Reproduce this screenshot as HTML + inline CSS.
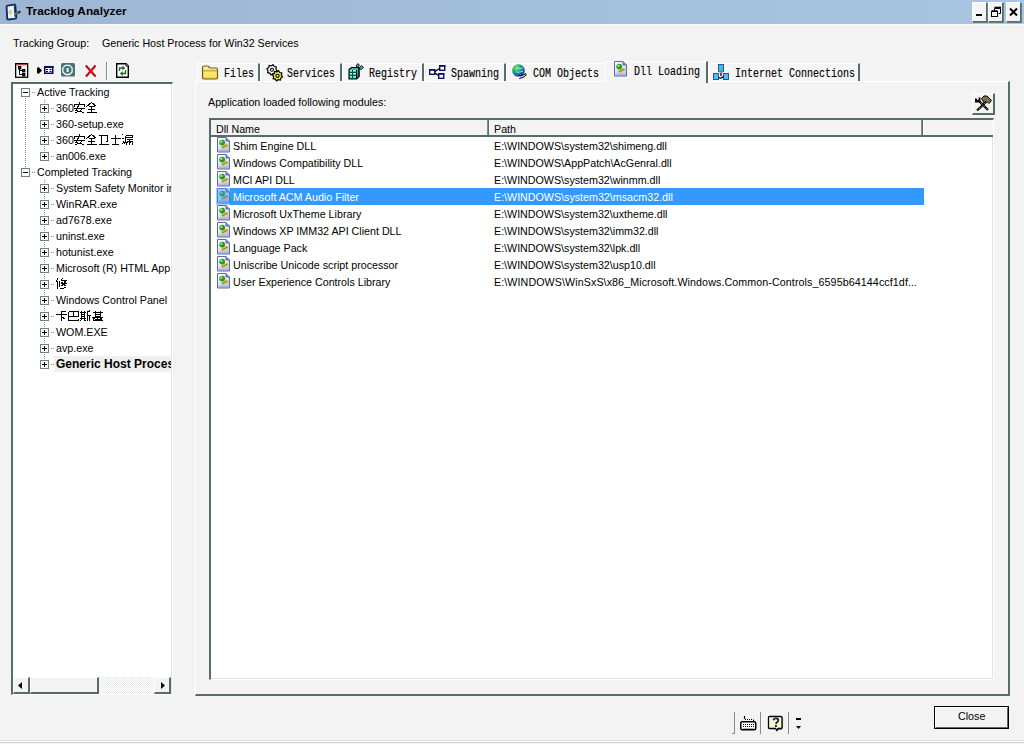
<!DOCTYPE html>
<html><head><meta charset="utf-8"><style>
*{margin:0;padding:0;box-sizing:border-box}
html,body{width:1024px;height:744px;overflow:hidden;background:#f3f3f3;font-family:"Liberation Sans",sans-serif;font-size:10.7px;color:#000}
.a{position:absolute}
.t{position:absolute;white-space:nowrap;line-height:13px}
.mono{position:absolute;white-space:nowrap;font-family:"Liberation Mono",monospace;font-size:10px;line-height:12px;transform:scaleY(1.2);transform-origin:0 0;-webkit-text-stroke:0.12px #000}
svg{position:absolute;overflow:visible}
</style></head><body>
<div class="a" style="left:0;top:0;width:1024px;height:24px;background:linear-gradient(90deg,#9db6d4,#a9c5e1)"></div><div class="a" style="left:0;top:24px;width:1024px;height:1px;background:#f8fafc"></div>
<svg style="left:2px;top:2px" width="22" height="20" viewBox="0 0 22 20">
<path d="M4.6 5 Q4.5 3.8 5.7 3.6 L12 2.6 Q13.2 2.4 13.3 3.6 L14.3 15.2 Q14.4 16.4 13.2 16.6 L6.5 17.5 Q5.3 17.7 5.2 16.5 Z" fill="#eaf2fc" stroke="#1a2a68" stroke-width="1.9"/>
<path d="M12.3 4 L13.1 15" stroke="#0a3a3a" stroke-width="1"/>
<ellipse cx="8.3" cy="10.3" rx="1.8" ry="2.8" fill="#ddd088"/>
<path d="M12.5 12.2 L18.5 9.6" stroke="#2a3048" stroke-width="2.2"/><path d="M12.5 12 L15.5 10.7" stroke="#d0e0f8" stroke-width="0.8"/>
</svg>
<div class="t" style="left:26px;top:4px;font-weight:bold;font-size:11.8px;line-height:15px;color:#000">Tracklog Analyzer</div>
<div class="a" style="left:972px;top:2px;width:15px;height:20px;background:#f4f4f4;border-top:1px solid #fff;border-left:1px solid #fff;border-right:1px solid #566c68;border-bottom:1px solid #566c68;box-shadow:1px 1px 0 #6d7d80"></div>
<div class="a" style="left:976px;top:14px;width:6px;height:2px;background:#000"></div>
<div class="a" style="left:988px;top:2px;width:15px;height:20px;background:#f4f4f4;border-top:1px solid #fff;border-left:1px solid #fff;border-right:1px solid #566c68;border-bottom:1px solid #566c68;box-shadow:1px 1px 0 #6d7d80"></div>
<svg style="left:988px;top:2px" width="16" height="20"><path d="M6.5 6.5 h6 v5 h-2 M6.5 6.5 v2" fill="none" stroke="#000" stroke-width="1"/><path d="M6.5 5.5 h6.5" stroke="#000" stroke-width="1.6"/><rect x="3.5" y="9.5" width="6" height="5" fill="none" stroke="#000"/><path d="M3.5 9 h6" stroke="#000" stroke-width="1.6"/></svg>
<div class="a" style="left:1006px;top:2px;width:15px;height:20px;background:#f4f4f4;border-top:1px solid #fff;border-left:1px solid #fff;border-right:1px solid #566c68;border-bottom:1px solid #566c68;box-shadow:1px 1px 0 #6d7d80"></div>
<svg style="left:1006px;top:2px" width="16" height="20"><path d="M4 6.5 L11 13.5 M11 6.5 L4 13.5" stroke="#000" stroke-width="2"/></svg>
<div class="t" style="left:13px;top:37px">Tracking Group:</div>
<div class="t" style="left:102px;top:37px">Generic Host Process for Win32 Services</div>
<svg style="left:12px;top:60px" width="24" height="20" viewBox="0 0 24 20">
<rect x="3.65" y="3.65" width="12" height="13.6" fill="#fff" stroke="#000" stroke-width="1.3"/>
<path d="M4.3 4.8 h10.7" stroke="#a01818" stroke-width="1"/>
<path d="M7.5 8.5 V14.5 H10.5 M7.5 10.5 H10.5" fill="none" stroke="#000" stroke-width="1"/>
<rect x="6.7" y="6.7" width="2" height="2" fill="#fff" stroke="#000" stroke-width="1.4"/>
<rect x="10.7" y="9.7" width="2" height="2" fill="#fff" stroke="#000" stroke-width="1.4"/>
<rect x="10.7" y="13.7" width="2" height="2" fill="#000" stroke="#000" stroke-width="1.4"/>
</svg>
<svg style="left:34px;top:60px" width="24" height="20" viewBox="0 0 24 20">
<path d="M3 8 L4.5 7 L8 10.5 L4.5 14 L3 13 Z" fill="#000"/>
<rect x="10.75" y="6.75" width="8" height="6.5" fill="#fff" stroke="#0a0a50" stroke-width="1.5"/>
<path d="M10 7 h9.5" stroke="#0a0a60" stroke-width="2"/>
<path d="M12 9.5 h2 M15.5 9.5 h2 M12 11.5 h2 M15.5 11.5 h2" stroke="#000" stroke-width="1"/>
</svg>
<svg style="left:60px;top:62px" width="16" height="16" viewBox="0 0 16 16">
<rect x="1" y="1" width="14" height="13.6" rx="1.5" fill="#4b7272"/>
<path d="M5.5 3.3 h4 l2.6 2.6 v4 l-2.6 2.6 h-4 l-2.6 -2.6 v-4 z" fill="#4b7272" stroke="#e6ffff" stroke-width="1.3"/>
<rect x="6.6" y="6" width="2" height="4" fill="#e8ffff"/>
</svg>
<svg style="left:84px;top:64px" width="14" height="14" viewBox="0 0 14 14">
<path d="M1.8 1.5 L11.6 12.5 M11.6 1.5 L2 12.5" stroke="#b80c18" stroke-width="2.1"/><path d="M5 5 L8.5 8.5 M8.5 5 L5 8.5" stroke="#f01010" stroke-width="1.5"/>
</svg>
<div class="a" style="left:106px;top:62px;width:1px;height:18px;background:#7c9090"></div><div class="a" style="left:107px;top:62px;width:1px;height:18px;background:#fff"></div>
<svg style="left:112px;top:60px" width="24" height="20" viewBox="0 0 24 20">
<path d="M4.7 3.7 H14 L16.3 6 V17.3 H4.7 Z" fill="#fff" stroke="#000" stroke-width="1.4"/>
<path d="M14 3.7 V6 H16.3" fill="#fff" stroke="#000" stroke-width="1"/>
<path d="M7.5 11 V8 H11" fill="none" stroke="#1a6a2a" stroke-width="1.3"/>
<path d="M10.5 5.5 L13.3 8 L10.5 10.2 Z" fill="#1a6a2a"/>
<path d="M13.5 10 V13.5 H10" fill="none" stroke="#1a6a2a" stroke-width="1.3"/>
<path d="M10.7 11 L7.9 13.5 L10.7 16 Z" fill="#1a6a2a"/>
</svg>
<div class="a" style="left:11px;top:82px;width:162px;height:613px;background:#fff;border-top:2px solid #566c68;border-left:2px solid #566c68;border-right:1px solid #fff;border-bottom:1px solid #fff"><div class="a" style="left:0;top:0;right:0;bottom:0;border-right:1px solid #e2e2e2;border-bottom:1px solid #e2e2e2"></div></div>
<div class="a" style="left:13px;top:84px;width:158px;height:593px;overflow:hidden">
<div class="a" style="left:12px;top:14px;width:1px;height:70px;background:repeating-linear-gradient(#7f8f8f 0 1px,transparent 1px 2px)"></div>
<div class="a" style="left:31px;top:16px;width:1px;height:52px;background:repeating-linear-gradient(#7f8f8f 0 1px,transparent 1px 2px)"></div>
<div class="a" style="left:31px;top:96px;width:1px;height:180px;background:repeating-linear-gradient(#7f8f8f 0 1px,transparent 1px 2px)"></div>
<div class="a" style="left:8px;top:4px;width:9px;height:9px;border:1px solid #6d837e;background:#fff"></div><div class="a" style="left:10px;top:8px;width:5px;height:1px;background:#000"></div>
<div class="a" style="left:19px;top:8px;width:3px;height:1px;background:repeating-linear-gradient(90deg,#7f8f8f 0 1px,transparent 1px 2px)"></div>
<div class="t" style="left:24px;top:2px">Active Tracking</div>
<div class="a" style="left:27px;top:20px;width:9px;height:9px;border:1px solid #6d837e;background:#fff"></div><div class="a" style="left:29px;top:24px;width:5px;height:1px;background:#000"></div><div class="a" style="left:31px;top:22px;width:1px;height:5px;background:#000"></div>
<div class="a" style="left:38px;top:24px;width:3px;height:1px;background:repeating-linear-gradient(90deg,#7f8f8f 0 1px,transparent 1px 2px)"></div>
<div class="t" style="left:43px;top:18px">360</div>
<svg style="left:61px;top:18px" width="12" height="12"><path d="M5.5 0 V2 M0.5 4.5 V2.5 H10.5 V4.5 M0 6.5 H11 M4.5 3.5 L2 8.5 L10 10.5 M8 6.5 L6.5 9 L1 10.5" stroke="#000" stroke-width="1" fill="none" shape-rendering="crispEdges"/></svg><svg style="left:73px;top:18px" width="12" height="12"><path d="M5.5 0.5 L0.5 4.5 M5.5 0.5 L10.5 4.5 M2.5 4.5 H8.5 M2 7.5 H9 M0.5 10.5 H10.5 M5.5 4.5 V10.5" stroke="#000" stroke-width="1" fill="none" shape-rendering="crispEdges"/></svg>
<div class="a" style="left:27px;top:36px;width:9px;height:9px;border:1px solid #6d837e;background:#fff"></div><div class="a" style="left:29px;top:40px;width:5px;height:1px;background:#000"></div><div class="a" style="left:31px;top:38px;width:1px;height:5px;background:#000"></div>
<div class="a" style="left:38px;top:40px;width:3px;height:1px;background:repeating-linear-gradient(90deg,#7f8f8f 0 1px,transparent 1px 2px)"></div>
<div class="t" style="left:43px;top:34px">360-setup.exe</div>
<div class="a" style="left:27px;top:52px;width:9px;height:9px;border:1px solid #6d837e;background:#fff"></div><div class="a" style="left:29px;top:56px;width:5px;height:1px;background:#000"></div><div class="a" style="left:31px;top:54px;width:1px;height:5px;background:#000"></div>
<div class="a" style="left:38px;top:56px;width:3px;height:1px;background:repeating-linear-gradient(90deg,#7f8f8f 0 1px,transparent 1px 2px)"></div>
<div class="t" style="left:43px;top:50px">360</div>
<svg style="left:61px;top:50px" width="12" height="12"><path d="M5.5 0 V2 M0.5 4.5 V2.5 H10.5 V4.5 M0 6.5 H11 M4.5 3.5 L2 8.5 L10 10.5 M8 6.5 L6.5 9 L1 10.5" stroke="#000" stroke-width="1" fill="none" shape-rendering="crispEdges"/></svg><svg style="left:73px;top:50px" width="12" height="12"><path d="M5.5 0.5 L0.5 4.5 M5.5 0.5 L10.5 4.5 M2.5 4.5 H8.5 M2 7.5 H9 M0.5 10.5 H10.5 M5.5 4.5 V10.5" stroke="#000" stroke-width="1" fill="none" shape-rendering="crispEdges"/></svg><svg style="left:85px;top:50px" width="12" height="12"><path d="M1 1.5 H9.5 V7.5 H8 M3.5 1.5 V10.5 M0.5 10.5 H10.5" stroke="#000" stroke-width="1" fill="none" shape-rendering="crispEdges"/></svg><svg style="left:97px;top:50px" width="12" height="12"><path d="M0.5 4.5 H10.5 M5.5 0.5 V10.5 M2 10.5 H9" stroke="#000" stroke-width="1" fill="none" shape-rendering="crispEdges"/></svg><svg style="left:109px;top:50px" width="12" height="12"><path d="M0.5 0.5 L1.5 1.5 M0 4 L1.5 5 M0.5 10.5 L2 7 M3.5 1.5 H10.5 V3.5 H3.5 M3.5 1.5 V6.5 L2.5 10.5 M4.5 5.5 H10.5 M4.5 7.5 H10.5 V10.5 M4.5 7.5 V10.5 M7.5 5.5 V10.5 M5.5 8.5 L6.5 9.5 M8.5 8.5 L9.5 9.5" stroke="#000" stroke-width="1" fill="none" shape-rendering="crispEdges"/></svg>
<div class="a" style="left:27px;top:68px;width:9px;height:9px;border:1px solid #6d837e;background:#fff"></div><div class="a" style="left:29px;top:72px;width:5px;height:1px;background:#000"></div><div class="a" style="left:31px;top:70px;width:1px;height:5px;background:#000"></div>
<div class="a" style="left:38px;top:72px;width:3px;height:1px;background:repeating-linear-gradient(90deg,#7f8f8f 0 1px,transparent 1px 2px)"></div>
<div class="t" style="left:43px;top:66px">an006.exe</div>
<div class="a" style="left:8px;top:84px;width:9px;height:9px;border:1px solid #6d837e;background:#fff"></div><div class="a" style="left:10px;top:88px;width:5px;height:1px;background:#000"></div>
<div class="a" style="left:19px;top:88px;width:3px;height:1px;background:repeating-linear-gradient(90deg,#7f8f8f 0 1px,transparent 1px 2px)"></div>
<div class="t" style="left:24px;top:82px">Completed Tracking</div>
<div class="a" style="left:27px;top:100px;width:9px;height:9px;border:1px solid #6d837e;background:#fff"></div><div class="a" style="left:29px;top:104px;width:5px;height:1px;background:#000"></div><div class="a" style="left:31px;top:102px;width:1px;height:5px;background:#000"></div>
<div class="a" style="left:38px;top:104px;width:3px;height:1px;background:repeating-linear-gradient(90deg,#7f8f8f 0 1px,transparent 1px 2px)"></div>
<div class="t" style="left:43px;top:98px">System Safety Monitor ir</div>
<div class="a" style="left:27px;top:116px;width:9px;height:9px;border:1px solid #6d837e;background:#fff"></div><div class="a" style="left:29px;top:120px;width:5px;height:1px;background:#000"></div><div class="a" style="left:31px;top:118px;width:1px;height:5px;background:#000"></div>
<div class="a" style="left:38px;top:120px;width:3px;height:1px;background:repeating-linear-gradient(90deg,#7f8f8f 0 1px,transparent 1px 2px)"></div>
<div class="t" style="left:43px;top:114px">WinRAR.exe</div>
<div class="a" style="left:27px;top:132px;width:9px;height:9px;border:1px solid #6d837e;background:#fff"></div><div class="a" style="left:29px;top:136px;width:5px;height:1px;background:#000"></div><div class="a" style="left:31px;top:134px;width:1px;height:5px;background:#000"></div>
<div class="a" style="left:38px;top:136px;width:3px;height:1px;background:repeating-linear-gradient(90deg,#7f8f8f 0 1px,transparent 1px 2px)"></div>
<div class="t" style="left:43px;top:130px">ad7678.exe</div>
<div class="a" style="left:27px;top:148px;width:9px;height:9px;border:1px solid #6d837e;background:#fff"></div><div class="a" style="left:29px;top:152px;width:5px;height:1px;background:#000"></div><div class="a" style="left:31px;top:150px;width:1px;height:5px;background:#000"></div>
<div class="a" style="left:38px;top:152px;width:3px;height:1px;background:repeating-linear-gradient(90deg,#7f8f8f 0 1px,transparent 1px 2px)"></div>
<div class="t" style="left:43px;top:146px">uninst.exe</div>
<div class="a" style="left:27px;top:164px;width:9px;height:9px;border:1px solid #6d837e;background:#fff"></div><div class="a" style="left:29px;top:168px;width:5px;height:1px;background:#000"></div><div class="a" style="left:31px;top:166px;width:1px;height:5px;background:#000"></div>
<div class="a" style="left:38px;top:168px;width:3px;height:1px;background:repeating-linear-gradient(90deg,#7f8f8f 0 1px,transparent 1px 2px)"></div>
<div class="t" style="left:43px;top:162px">hotunist.exe</div>
<div class="a" style="left:27px;top:180px;width:9px;height:9px;border:1px solid #6d837e;background:#fff"></div><div class="a" style="left:29px;top:184px;width:5px;height:1px;background:#000"></div><div class="a" style="left:31px;top:182px;width:1px;height:5px;background:#000"></div>
<div class="a" style="left:38px;top:184px;width:3px;height:1px;background:repeating-linear-gradient(90deg,#7f8f8f 0 1px,transparent 1px 2px)"></div>
<div class="t" style="left:43px;top:178px">Microsoft (R) HTML App</div>
<div class="a" style="left:27px;top:196px;width:9px;height:9px;border:1px solid #6d837e;background:#fff"></div><div class="a" style="left:29px;top:200px;width:5px;height:1px;background:#000"></div><div class="a" style="left:31px;top:198px;width:1px;height:5px;background:#000"></div>
<div class="a" style="left:38px;top:200px;width:3px;height:1px;background:repeating-linear-gradient(90deg,#7f8f8f 0 1px,transparent 1px 2px)"></div>
<svg style="left:43px;top:194px" width="12" height="12"><path d="M2 0.5 L0 4 M1.5 2.5 V11 M3.5 2.5 V9 M6.5 0.5 L5 2.5 M5 2.5 H10 L8.5 4 M5.5 4 L9.5 8 M9.5 4 L5.5 8 M4.5 5.5 H11 M4 10.5 H7.5 L10 9" stroke="#000" stroke-width="1" fill="none" shape-rendering="crispEdges"/></svg>
<div class="a" style="left:27px;top:212px;width:9px;height:9px;border:1px solid #6d837e;background:#fff"></div><div class="a" style="left:29px;top:216px;width:5px;height:1px;background:#000"></div><div class="a" style="left:31px;top:214px;width:1px;height:5px;background:#000"></div>
<div class="a" style="left:38px;top:216px;width:3px;height:1px;background:repeating-linear-gradient(90deg,#7f8f8f 0 1px,transparent 1px 2px)"></div>
<div class="t" style="left:43px;top:210px">Windows Control Panel</div>
<div class="a" style="left:27px;top:228px;width:9px;height:9px;border:1px solid #6d837e;background:#fff"></div><div class="a" style="left:29px;top:232px;width:5px;height:1px;background:#000"></div><div class="a" style="left:31px;top:230px;width:1px;height:5px;background:#000"></div>
<div class="a" style="left:38px;top:232px;width:3px;height:1px;background:repeating-linear-gradient(90deg,#7f8f8f 0 1px,transparent 1px 2px)"></div>
<svg style="left:43px;top:226px" width="12" height="12"><path d="M5.5 0.5 V11 M5.5 1.5 H9.5 M0 4.5 H11 M6 7 L9 9" stroke="#000" stroke-width="1" fill="none" shape-rendering="crispEdges"/></svg><svg style="left:55px;top:226px" width="12" height="12"><path d="M0.5 1.5 H10 V6.5 H0.5 M0.5 1.5 V10.5 H10.5 V9 M5.5 1.5 V6.5" stroke="#000" stroke-width="1" fill="none" shape-rendering="crispEdges"/></svg><svg style="left:67px;top:226px" width="12" height="12"><path d="M0 2.5 H6 M1.5 0.5 V8.5 M4.5 0.5 V8.5 M1.5 4.5 H4.5 M1.5 6.5 H4.5 M0 8.5 H6 M2 9 L0.5 11 M4 9 L5.5 11 M10.5 0.5 L7.5 2 V11 M7.5 5.5 H11 M9.5 5.5 V11" stroke="#000" stroke-width="1" fill="none" shape-rendering="crispEdges"/></svg><svg style="left:79px;top:226px" width="12" height="12"><path d="M0.5 2.5 H10.5 M3 0.5 V7 M8 0.5 V7 M3 4.5 H8 M3 6.5 H8 M0 7.5 H11 M3 8 L1 9.5 M8 8 L10 9.5 M5.5 7.5 V11 M2.5 9.5 H8.5 M0.5 10.5 H10.5" stroke="#000" stroke-width="1" fill="none" shape-rendering="crispEdges"/></svg>
<div class="a" style="left:27px;top:244px;width:9px;height:9px;border:1px solid #6d837e;background:#fff"></div><div class="a" style="left:29px;top:248px;width:5px;height:1px;background:#000"></div><div class="a" style="left:31px;top:246px;width:1px;height:5px;background:#000"></div>
<div class="a" style="left:38px;top:248px;width:3px;height:1px;background:repeating-linear-gradient(90deg,#7f8f8f 0 1px,transparent 1px 2px)"></div>
<div class="t" style="left:43px;top:242px">WOM.EXE</div>
<div class="a" style="left:27px;top:260px;width:9px;height:9px;border:1px solid #6d837e;background:#fff"></div><div class="a" style="left:29px;top:264px;width:5px;height:1px;background:#000"></div><div class="a" style="left:31px;top:262px;width:1px;height:5px;background:#000"></div>
<div class="a" style="left:38px;top:264px;width:3px;height:1px;background:repeating-linear-gradient(90deg,#7f8f8f 0 1px,transparent 1px 2px)"></div>
<div class="t" style="left:43px;top:258px">avp.exe</div>
<div class="a" style="left:27px;top:276px;width:9px;height:9px;border:1px solid #6d837e;background:#fff"></div><div class="a" style="left:29px;top:280px;width:5px;height:1px;background:#000"></div><div class="a" style="left:31px;top:278px;width:1px;height:5px;background:#000"></div>
<div class="a" style="left:38px;top:280px;width:3px;height:1px;background:repeating-linear-gradient(90deg,#7f8f8f 0 1px,transparent 1px 2px)"></div>
<div class="a" style="left:41px;top:272px;width:120px;height:16px;background:#f0f0f0"></div>
<div class="t" style="left:43px;top:274px;font-weight:bold;font-size:12px">Generic Host Proces</div>
</div>
<div class="a" style="left:13px;top:677px;width:158px;height:17px;background:repeating-conic-gradient(#fff 0 25%,#ebebeb 0 50%) 0 0/2px 2px"></div>
<div class="a" style="left:13px;top:677px;width:17px;height:17px;background:#f3f3f3;border-top:1px solid #fff;border-left:1px solid #fff;border-right:2px solid #566c68;border-bottom:2px solid #566c68"></div>
<div class="a" style="left:30px;top:677px;width:69px;height:17px;background:#f3f3f3;border-top:1px solid #fff;border-left:1px solid #fff;border-right:2px solid #566c68;border-bottom:2px solid #566c68"></div>
<div class="a" style="left:154px;top:677px;width:17px;height:17px;background:#f3f3f3;border-top:1px solid #fff;border-left:1px solid #fff;border-right:2px solid #566c68;border-bottom:2px solid #566c68"></div>
<svg style="left:13px;top:677px" width="17" height="17"><path d="M5 8.5 L9 5 V12 Z" fill="#000"/></svg>
<svg style="left:154px;top:677px" width="17" height="17"><path d="M11 8.5 L7 5 V12 Z" fill="#000"/></svg>
<div class="a" style="left:195px;top:81px;width:815px;height:615px;border-left:1px solid #fff;border-top:1px solid #fff;border-right:2px solid #566c68;border-bottom:2px solid #566c68"></div>
<div class="a" style="left:197px;top:63px;width:63px;height:18px;background:#f5f5f5;border-top:1px solid #fff;border-left:1px solid #fff;border-right:2px solid #566c68"></div>
<div class="mono" style="left:224px;top:67px">Files</div>
<svg style="left:201px;top:64px" width="18" height="16" viewBox="0 0 18 16"><defs><linearGradient id="fg" x1="0" y1="0" x2="0" y2="1"><stop offset="0" stop-color="#fff4a0"/><stop offset="1" stop-color="#e8c838"/></linearGradient></defs>
<path d="M1.5 4 q0 -2 2 -2 h3.5 l2 2 h6 q1.5 0 1.5 1.5 v8 q0 1.5 -1.5 1.5 h-12 q-1.5 0 -1.5 -1.5 z" fill="url(#fg)" stroke="#7a5a18" stroke-width="1.2"/>
<path d="M2 6.8 h14.5" stroke="#b89030" stroke-width="1"/><path d="M3 8 h12.5 v5.5 h-12.5z" fill="#fcec70" opacity=".7"/></svg>
<div class="a" style="left:260px;top:63px;width:82px;height:18px;background:#f5f5f5;border-top:1px solid #fff;border-left:1px solid #fff;border-right:2px solid #566c68"></div>
<div class="mono" style="left:287px;top:67px">Services</div>
<svg style="left:264px;top:63px" width="21" height="20" viewBox="0 0 21 20"><path d="M13.10 7.81 L11.33 9.02 L10.89 11.12 L8.78 10.72 L6.99 11.90 L5.78 10.13 L3.68 9.69 L4.08 7.58 L2.90 5.79 L4.67 4.58 L5.11 2.48 L7.22 2.88 L9.01 1.70 L10.22 3.47 L12.32 3.91 L11.92 6.02 Z" fill="#fff" stroke="#000" stroke-width="1.2"/><circle cx="8" cy="6.8" r="1.5" fill="#fff" stroke="#000" stroke-width="1.1"/>
<path d="M18.60 13.81 L16.83 15.02 L16.39 17.12 L14.28 16.72 L12.49 17.90 L11.28 16.13 L9.18 15.69 L9.58 13.58 L8.40 11.79 L10.17 10.58 L10.61 8.48 L12.72 8.88 L14.51 7.70 L15.72 9.47 L17.82 9.91 L17.42 12.02 Z" fill="#e4e44a" stroke="#000" stroke-width="1.2"/><circle cx="13.5" cy="12.8" r="1.6" fill="#fff" stroke="#000" stroke-width="1.1"/></svg>
<div class="a" style="left:342px;top:63px;width:82px;height:18px;background:#f5f5f5;border-top:1px solid #fff;border-left:1px solid #fff;border-right:2px solid #566c68"></div>
<div class="mono" style="left:369px;top:67px">Registry</div>
<svg style="left:345px;top:62px" width="20" height="20" viewBox="0 0 20 20"><path d="M4 7.5 l2.5 -2 h7.5 v9 l-2.5 2.5 h-7.5 z" fill="#30b8a8" stroke="#000" stroke-width="1.1"/>
<path d="M11.5 8 v9" stroke="#000"/><path d="M14 5.5 v9 l-2.5 2.5" fill="#1a6a60" stroke="#000"/>
<path d="M4.5 10.5 h7 M4.5 13.5 h7 M7.5 8 v9" stroke="#0a4a44" stroke-width="1"/>
<path d="M5 8.7 h2 M8.3 8.7 h2.5 M5 11.7 h2 M8.3 11.7 h2.5 M5 14.7 h2 M8.3 14.7 h2.5" stroke="#a8fff4" stroke-width="1.3"/>
<path d="M11 4 l2 -2.5 l1.5 2 l-2 1.5z M14 6 l2.5 -2.5 l2 2 l-2.5 2z" fill="#30b8a8" stroke="#000" stroke-width="0.9"/></svg>
<div class="a" style="left:424px;top:63px;width:82px;height:18px;background:#f5f5f5;border-top:1px solid #fff;border-left:1px solid #fff;border-right:2px solid #566c68"></div>
<div class="mono" style="left:451px;top:67px">Spawning</div>
<svg style="left:425px;top:62px" width="22" height="20" viewBox="0 0 22 20"><g fill="#fff" stroke="#10106a" stroke-width="1.4">
<rect x="4.7" y="7.7" width="5" height="4.6"/><rect x="14.7" y="3.7" width="5" height="4.6"/><rect x="13.7" y="11.7" width="5" height="4.6"/></g>
<path d="M4 8 h6.5 M14 4 h6.5 M13 12 h6.5" stroke="#10106a" stroke-width="1.6"/>
<path d="M10 9.5 L14.5 6.5 M10 11 L13.5 13.5" stroke="#000" stroke-width="1.2"/></svg>
<div class="a" style="left:506px;top:63px;width:100px;height:18px;background:#f5f5f5;border-top:1px solid #fff;border-left:1px solid #fff;border-right:none"></div>
<div class="mono" style="left:533px;top:67px">COM Objects</div>
<svg style="left:508px;top:62px" width="20" height="20" viewBox="0 0 20 20"><defs><radialGradient id="gg" cx=".35" cy=".3" r=".8"><stop offset="0" stop-color="#7ef07e"/><stop offset=".4" stop-color="#28a860"/><stop offset=".75" stop-color="#1a56c8"/><stop offset="1" stop-color="#0a2a90"/></radialGradient></defs>
<circle cx="10.5" cy="8.5" r="6.3" fill="url(#gg)"/>
<path d="M9 6 q3 1 6 0 M8 10 q3 1 7 -1" stroke="#9ef0f0" stroke-width="1" fill="none" opacity=".8"/>
<path d="M10 13.5 q3 1 6 -1 l1.5 -1 l0.8 1.5 q-2 2.5 -7 3.5" fill="#c8d0ff" stroke="#000" stroke-width="1"/></svg>
<div class="a" style="left:708px;top:63px;width:152px;height:18px;background:#f5f5f5;border-top:1px solid #fff;border-left:1px solid #fff;border-right:2px solid #566c68"></div>
<div class="mono" style="left:735px;top:67px">Internet Connections</div>
<svg style="left:709px;top:62px" width="22" height="20" viewBox="0 0 22 20"><g stroke="#3050a0" stroke-width="1">
<rect x="9.5" y="2.5" width="5" height="7" fill="#30c0e0"/>
<rect x="4.5" y="11.5" width="5" height="6" fill="#40c8e8"/>
<rect x="14.5" y="11.5" width="5" height="6" fill="#40c8e8"/></g>
<path d="M9.5 9.5 h5 l-1 1.5 h-3z" fill="#c090c0"/>
<path d="M12 11 v3 M9.5 15.5 q2.5 1.5 5 -1" stroke="#000" stroke-width="1.3" fill="none"/></svg>
<div class="a" style="left:605px;top:61px;width:103px;height:22px;background:#f3f3f3;border-top:1px solid #fff;border-left:1px solid #fff;border-right:2px solid #566c68"></div>
<div class="mono" style="left:634px;top:65px">Dll Loading</div>
<svg style="left:613px;top:61px" width="16" height="16" viewBox="0 0 16 16"><defs><linearGradient id="dp" x1="0" y1="0" x2="0.4" y2="1"><stop offset="0" stop-color="#fff"/><stop offset=".6" stop-color="#d8eafa"/><stop offset="1" stop-color="#b8c8f0"/></linearGradient></defs>
<path d="M1.5 0.5 h8.5 l3.5 3.5 v11 h-12 z" fill="url(#dp)" stroke="#66689a" stroke-width="1"/>
<path d="M10 0.5 v3.5 h3.5" fill="#7a8ad8" stroke="#66689a" stroke-width="1"/>
<path d="M4.5 9.8 L10.5 6.5 L12.8 9 L7 12.3 Z" fill="#dcc040"/><path d="M6 10.8 L11.5 8" stroke="#8a7020" stroke-width="0.9"/>
<circle cx="6.2" cy="5.6" r="2.9" fill="#2a962a"/><circle cx="5.4" cy="4.8" r="1.2" fill="#9ae87a"/>
<path d="M3 13.2 h9.5" stroke="#a8b4e8" stroke-width="1.2"/></svg>
<div class="t" style="left:208px;top:96px">Application loaded following modules:</div>
<div class="a" style="left:972px;top:93px;width:23px;height:22px;border-top:1px solid #fff;border-left:1px solid #fff;border-right:2px solid #566c68;border-bottom:2px solid #566c68"></div>
<svg style="left:972px;top:93px" width="23" height="22" viewBox="0 0 23 22"><path d="M9.5 5.5 l2.5 -2.5 h3 l4.5 4.5 l-2.5 3 l-2 -2 l-2.5 2 z" fill="#7c7446" stroke="#000" stroke-width="1"/>
<path d="M14.5 8.5 L5 17.5" stroke="#000" stroke-width="2.3"/><path d="M14.5 8.5 L5 17.5" stroke="#fff" stroke-width="0.7" stroke-dasharray="1 1.3"/>
<path d="M7.5 8.5 L16 17" stroke="#000" stroke-width="2.3"/><path d="M7.5 8.5 L16 17" stroke="#fff" stroke-width="0.7" stroke-dasharray="1 1.3"/>
<path d="M3 5.5 v4 h4 l1.5 -1.5 v-3.5 h-1.8 v2.3 h-1.9 v-1.3 z" fill="#000"/></svg>
<div class="a" style="left:209px;top:118px;width:785px;height:562px;background:#fff;border-top:2px solid #566c68;border-left:2px solid #566c68;border-right:1px solid #fff;border-bottom:1px solid #fff"><div class="a" style="left:0;top:0;right:0;bottom:0;border-right:1px solid #e2e2e2;border-bottom:1px solid #e2e2e2"></div></div>
<div class="a" style="left:211px;top:120px;width:782px;height:17px;background:#f3f3f3;border-bottom:2px solid #566c68"></div>
<div class="a" style="left:487px;top:120px;width:1px;height:15px;background:#7d9090"></div><div class="a" style="left:488px;top:120px;width:1px;height:15px;background:#566c68"></div><div class="a" style="left:489px;top:120px;width:1px;height:15px;background:#fff"></div>
<div class="a" style="left:921px;top:120px;width:1px;height:15px;background:#7d9090"></div><div class="a" style="left:922px;top:120px;width:1px;height:15px;background:#566c68"></div><div class="a" style="left:923px;top:120px;width:1px;height:15px;background:#fff"></div>
<div class="t" style="left:216px;top:123px">Dll Name</div>
<div class="t" style="left:494px;top:123px">Path</div>
<svg style="left:216px;top:137px" width="16" height="16" viewBox="0 0 16 16"><defs><linearGradient id="dp" x1="0" y1="0" x2="0.4" y2="1"><stop offset="0" stop-color="#fff"/><stop offset=".6" stop-color="#d8eafa"/><stop offset="1" stop-color="#b8c8f0"/></linearGradient></defs>
<path d="M1.5 0.5 h8.5 l3.5 3.5 v11 h-12 z" fill="url(#dp)" stroke="#66689a" stroke-width="1"/>
<path d="M10 0.5 v3.5 h3.5" fill="#7a8ad8" stroke="#66689a" stroke-width="1"/>
<path d="M4.5 9.8 L10.5 6.5 L12.8 9 L7 12.3 Z" fill="#dcc040"/><path d="M6 10.8 L11.5 8" stroke="#8a7020" stroke-width="0.9"/>
<circle cx="6.2" cy="5.6" r="2.9" fill="#2a962a"/><circle cx="5.4" cy="4.8" r="1.2" fill="#9ae87a"/>
<path d="M3 13.2 h9.5" stroke="#a8b4e8" stroke-width="1.2"/></svg>
<div class="t" style="left:233px;top:140px;color:#000">Shim Engine DLL</div>
<div class="t" style="left:494px;top:140px;color:#000;">E:\WINDOWS\system32\shimeng.dll</div>
<svg style="left:216px;top:154px" width="16" height="16" viewBox="0 0 16 16"><defs><linearGradient id="dp" x1="0" y1="0" x2="0.4" y2="1"><stop offset="0" stop-color="#fff"/><stop offset=".6" stop-color="#d8eafa"/><stop offset="1" stop-color="#b8c8f0"/></linearGradient></defs>
<path d="M1.5 0.5 h8.5 l3.5 3.5 v11 h-12 z" fill="url(#dp)" stroke="#66689a" stroke-width="1"/>
<path d="M10 0.5 v3.5 h3.5" fill="#7a8ad8" stroke="#66689a" stroke-width="1"/>
<path d="M4.5 9.8 L10.5 6.5 L12.8 9 L7 12.3 Z" fill="#dcc040"/><path d="M6 10.8 L11.5 8" stroke="#8a7020" stroke-width="0.9"/>
<circle cx="6.2" cy="5.6" r="2.9" fill="#2a962a"/><circle cx="5.4" cy="4.8" r="1.2" fill="#9ae87a"/>
<path d="M3 13.2 h9.5" stroke="#a8b4e8" stroke-width="1.2"/></svg>
<div class="t" style="left:233px;top:157px;color:#000">Windows Compatibility DLL</div>
<div class="t" style="left:494px;top:157px;color:#000;">E:\WINDOWS\AppPatch\AcGenral.dll</div>
<svg style="left:216px;top:171px" width="16" height="16" viewBox="0 0 16 16"><defs><linearGradient id="dp" x1="0" y1="0" x2="0.4" y2="1"><stop offset="0" stop-color="#fff"/><stop offset=".6" stop-color="#d8eafa"/><stop offset="1" stop-color="#b8c8f0"/></linearGradient></defs>
<path d="M1.5 0.5 h8.5 l3.5 3.5 v11 h-12 z" fill="url(#dp)" stroke="#66689a" stroke-width="1"/>
<path d="M10 0.5 v3.5 h3.5" fill="#7a8ad8" stroke="#66689a" stroke-width="1"/>
<path d="M4.5 9.8 L10.5 6.5 L12.8 9 L7 12.3 Z" fill="#dcc040"/><path d="M6 10.8 L11.5 8" stroke="#8a7020" stroke-width="0.9"/>
<circle cx="6.2" cy="5.6" r="2.9" fill="#2a962a"/><circle cx="5.4" cy="4.8" r="1.2" fill="#9ae87a"/>
<path d="M3 13.2 h9.5" stroke="#a8b4e8" stroke-width="1.2"/></svg>
<div class="t" style="left:233px;top:174px;color:#000">MCI API DLL</div>
<div class="t" style="left:494px;top:174px;color:#000;">E:\WINDOWS\system32\winmm.dll</div>
<div class="a" style="left:230px;top:188px;width:694px;height:17px;background:#3399ff"></div>
<svg style="left:216px;top:188px" width="16" height="16" viewBox="0 0 16 16"><defs><linearGradient id="dp" x1="0" y1="0" x2="0.4" y2="1"><stop offset="0" stop-color="#fff"/><stop offset=".6" stop-color="#d8eafa"/><stop offset="1" stop-color="#b8c8f0"/></linearGradient></defs>
<path d="M1.5 0.5 h8.5 l3.5 3.5 v11 h-12 z" fill="url(#dp)" stroke="#66689a" stroke-width="1"/>
<path d="M10 0.5 v3.5 h3.5" fill="#7a8ad8" stroke="#66689a" stroke-width="1"/>
<path d="M4.5 9.8 L10.5 6.5 L12.8 9 L7 12.3 Z" fill="#dcc040"/><path d="M6 10.8 L11.5 8" stroke="#8a7020" stroke-width="0.9"/>
<circle cx="6.2" cy="5.6" r="2.9" fill="#2a962a"/><circle cx="5.4" cy="4.8" r="1.2" fill="#9ae87a"/>
<path d="M3 13.2 h9.5" stroke="#a8b4e8" stroke-width="1.2"/></svg>
<div class="a" style="left:216px;top:188px;width:14px;height:17px;background:rgba(51,153,255,.45)"></div>
<div class="t" style="left:233px;top:191px;color:#fff">Microsoft ACM Audio Filter</div>
<div class="t" style="left:494px;top:191px;color:#fff;">E:\WINDOWS\system32\msacm32.dll</div>
<svg style="left:216px;top:205px" width="16" height="16" viewBox="0 0 16 16"><defs><linearGradient id="dp" x1="0" y1="0" x2="0.4" y2="1"><stop offset="0" stop-color="#fff"/><stop offset=".6" stop-color="#d8eafa"/><stop offset="1" stop-color="#b8c8f0"/></linearGradient></defs>
<path d="M1.5 0.5 h8.5 l3.5 3.5 v11 h-12 z" fill="url(#dp)" stroke="#66689a" stroke-width="1"/>
<path d="M10 0.5 v3.5 h3.5" fill="#7a8ad8" stroke="#66689a" stroke-width="1"/>
<path d="M4.5 9.8 L10.5 6.5 L12.8 9 L7 12.3 Z" fill="#dcc040"/><path d="M6 10.8 L11.5 8" stroke="#8a7020" stroke-width="0.9"/>
<circle cx="6.2" cy="5.6" r="2.9" fill="#2a962a"/><circle cx="5.4" cy="4.8" r="1.2" fill="#9ae87a"/>
<path d="M3 13.2 h9.5" stroke="#a8b4e8" stroke-width="1.2"/></svg>
<div class="t" style="left:233px;top:208px;color:#000">Microsoft UxTheme Library</div>
<div class="t" style="left:494px;top:208px;color:#000;">E:\WINDOWS\system32\uxtheme.dll</div>
<svg style="left:216px;top:222px" width="16" height="16" viewBox="0 0 16 16"><defs><linearGradient id="dp" x1="0" y1="0" x2="0.4" y2="1"><stop offset="0" stop-color="#fff"/><stop offset=".6" stop-color="#d8eafa"/><stop offset="1" stop-color="#b8c8f0"/></linearGradient></defs>
<path d="M1.5 0.5 h8.5 l3.5 3.5 v11 h-12 z" fill="url(#dp)" stroke="#66689a" stroke-width="1"/>
<path d="M10 0.5 v3.5 h3.5" fill="#7a8ad8" stroke="#66689a" stroke-width="1"/>
<path d="M4.5 9.8 L10.5 6.5 L12.8 9 L7 12.3 Z" fill="#dcc040"/><path d="M6 10.8 L11.5 8" stroke="#8a7020" stroke-width="0.9"/>
<circle cx="6.2" cy="5.6" r="2.9" fill="#2a962a"/><circle cx="5.4" cy="4.8" r="1.2" fill="#9ae87a"/>
<path d="M3 13.2 h9.5" stroke="#a8b4e8" stroke-width="1.2"/></svg>
<div class="t" style="left:233px;top:225px;color:#000">Windows XP IMM32 API Client DLL</div>
<div class="t" style="left:494px;top:225px;color:#000;">E:\WINDOWS\system32\imm32.dll</div>
<svg style="left:216px;top:239px" width="16" height="16" viewBox="0 0 16 16"><defs><linearGradient id="dp" x1="0" y1="0" x2="0.4" y2="1"><stop offset="0" stop-color="#fff"/><stop offset=".6" stop-color="#d8eafa"/><stop offset="1" stop-color="#b8c8f0"/></linearGradient></defs>
<path d="M1.5 0.5 h8.5 l3.5 3.5 v11 h-12 z" fill="url(#dp)" stroke="#66689a" stroke-width="1"/>
<path d="M10 0.5 v3.5 h3.5" fill="#7a8ad8" stroke="#66689a" stroke-width="1"/>
<path d="M4.5 9.8 L10.5 6.5 L12.8 9 L7 12.3 Z" fill="#dcc040"/><path d="M6 10.8 L11.5 8" stroke="#8a7020" stroke-width="0.9"/>
<circle cx="6.2" cy="5.6" r="2.9" fill="#2a962a"/><circle cx="5.4" cy="4.8" r="1.2" fill="#9ae87a"/>
<path d="M3 13.2 h9.5" stroke="#a8b4e8" stroke-width="1.2"/></svg>
<div class="t" style="left:233px;top:242px;color:#000">Language Pack</div>
<div class="t" style="left:494px;top:242px;color:#000;">E:\WINDOWS\system32\lpk.dll</div>
<svg style="left:216px;top:256px" width="16" height="16" viewBox="0 0 16 16"><defs><linearGradient id="dp" x1="0" y1="0" x2="0.4" y2="1"><stop offset="0" stop-color="#fff"/><stop offset=".6" stop-color="#d8eafa"/><stop offset="1" stop-color="#b8c8f0"/></linearGradient></defs>
<path d="M1.5 0.5 h8.5 l3.5 3.5 v11 h-12 z" fill="url(#dp)" stroke="#66689a" stroke-width="1"/>
<path d="M10 0.5 v3.5 h3.5" fill="#7a8ad8" stroke="#66689a" stroke-width="1"/>
<path d="M4.5 9.8 L10.5 6.5 L12.8 9 L7 12.3 Z" fill="#dcc040"/><path d="M6 10.8 L11.5 8" stroke="#8a7020" stroke-width="0.9"/>
<circle cx="6.2" cy="5.6" r="2.9" fill="#2a962a"/><circle cx="5.4" cy="4.8" r="1.2" fill="#9ae87a"/>
<path d="M3 13.2 h9.5" stroke="#a8b4e8" stroke-width="1.2"/></svg>
<div class="t" style="left:233px;top:259px;color:#000">Uniscribe Unicode script processor</div>
<div class="t" style="left:494px;top:259px;color:#000;">E:\WINDOWS\system32\usp10.dll</div>
<svg style="left:216px;top:273px" width="16" height="16" viewBox="0 0 16 16"><defs><linearGradient id="dp" x1="0" y1="0" x2="0.4" y2="1"><stop offset="0" stop-color="#fff"/><stop offset=".6" stop-color="#d8eafa"/><stop offset="1" stop-color="#b8c8f0"/></linearGradient></defs>
<path d="M1.5 0.5 h8.5 l3.5 3.5 v11 h-12 z" fill="url(#dp)" stroke="#66689a" stroke-width="1"/>
<path d="M10 0.5 v3.5 h3.5" fill="#7a8ad8" stroke="#66689a" stroke-width="1"/>
<path d="M4.5 9.8 L10.5 6.5 L12.8 9 L7 12.3 Z" fill="#dcc040"/><path d="M6 10.8 L11.5 8" stroke="#8a7020" stroke-width="0.9"/>
<circle cx="6.2" cy="5.6" r="2.9" fill="#2a962a"/><circle cx="5.4" cy="4.8" r="1.2" fill="#9ae87a"/>
<path d="M3 13.2 h9.5" stroke="#a8b4e8" stroke-width="1.2"/></svg>
<div class="t" style="left:233px;top:276px;color:#000">User Experience Controls Library</div>
<div class="t" style="left:494px;top:276px;color:#000;letter-spacing:0.09px;">E:\WINDOWS\WinSxS\x86_Microsoft.Windows.Common-Controls_6595b64144ccf1df...</div>
<div class="a" style="left:734px;top:712px;width:1px;height:22px;background:#7c9090"></div><div class="a" style="left:732px;top:733px;width:3px;height:1px;background:#7c9090"></div>
<div class="a" style="left:760px;top:712px;width:1px;height:22px;background:#7c9090"></div>
<div class="a" style="left:788px;top:712px;width:1px;height:22px;background:#7c9090"></div>
<svg style="left:736px;top:712px" width="24" height="24" viewBox="0 0 24 24"><rect x="4.75" y="9.75" width="15" height="8" rx="1.5" fill="#fff" stroke="#000" stroke-width="1.5"/>
<path d="M7 12.5 h11 M7 14.5 h11" stroke="#000" stroke-width="1.2" stroke-dasharray="1 1"/>
<path d="M7 16.5 h11" stroke="#b0b0b0" stroke-width="1"/>
<path d="M8.5 4 v3" stroke="#000" stroke-width="1.2"/><path d="M9 7.5 h8" stroke="#000" stroke-width="1.2" stroke-dasharray="1 1"/><path d="M17.5 7.5 v2" stroke="#000" stroke-width="1"/></svg>
<svg style="left:764px;top:712px" width="24" height="24" viewBox="0 0 24 24"><path d="M5.5 4.5 h11.5 q1 0 1 1 v10 q0 1 -1 1 h-3 l-1 2 l-1.5 -2 h-6 q-1 0 -1 -1 v-10 q0 -1 1 -1z" fill="#fafad2" stroke="#000" stroke-width="1.3"/>
<path d="M18.6 5.5 v11 M14 17.5 h4" stroke="#000" stroke-width="0.8" opacity=".5"/>
<path d="M9.3 8.3 q0.5 -2 2.5 -2 q2.5 0 2.5 2 q0 1.5 -2 2.5 v1.2" stroke="#1a1a50" stroke-width="1.8" fill="none"/>
<rect x="11" y="13" width="1.8" height="1.8" fill="#000"/></svg>
<div class="a" style="left:796px;top:718px;width:5px;height:2px;background:#000"></div>
<svg style="left:795px;top:725px" width="7" height="5" viewBox="0 0 7 5"><path d="M1 1 h5 l-2.5 3z" fill="#000"/></svg>
<div class="a" style="left:0;top:740px;width:1024px;height:1px;background:#e0e0e0"></div><div class="a" style="left:0;top:741px;width:1024px;height:1px;background:#fff"></div><div class="a" style="left:0;top:742px;width:1024px;height:1px;background:#d2d2d2"></div><div class="a" style="left:0;top:743px;width:1024px;height:1px;background:#f8f8f8"></div>
<div class="a" style="left:934px;top:706px;width:75px;height:23px;border:1px solid #000;background:#f3f3f3"><div class="a" style="left:0;top:0;right:0;bottom:0;border-top:1px solid #fff;border-left:1px solid #fff;border-right:1px solid #566c68;border-bottom:1px solid #566c68"></div></div>
<div class="t" style="left:958px;top:710px">Close</div>
</body></html>
